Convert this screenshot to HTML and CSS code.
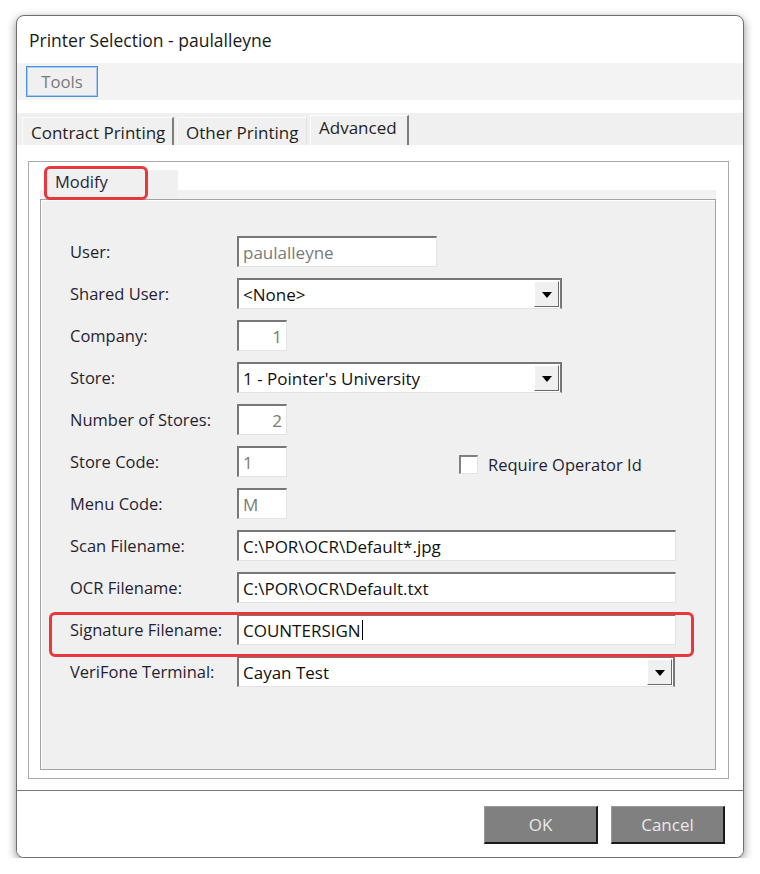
FILE: index.html
```html
<!DOCTYPE html>
<html>
<head>
<meta charset="utf-8">
<title>Printer Selection</title>
<link rel="stylesheet" href="styles.css">
</head>
<body>
<div class="window">
  <div class="titlebar">Printer Selection - paulalleyne</div>
  <div class="toolbar"><div class="tools-btn">Tools</div></div>
  <div class="gap"></div>
  <div class="tabstrip">
    <div class="tab tab-first">Contract Printing</div>
    <div class="tab tab-other">Other Printing</div>
    <div class="tab tab-active">Advanced</div>
  </div>
  <div class="page">
    <div class="group">
      <div class="subtabs">
        <div class="subtab">Modify</div>
      </div>
      <div class="panel">
        <div class="row">
          <span class="label">User:</span>
          <div class="field w-user disabled">paulalleyne</div>
        </div>
        <div class="row">
          <span class="label">Shared User:</span>
          <div class="field select w-select"><span class="sel-text">&lt;None&gt;</span><span class="drop"><span class="tri"></span></span></div>
        </div>
        <div class="row">
          <span class="label">Company:</span>
          <div class="field w-short disabled right">1</div>
        </div>
        <div class="row">
          <span class="label">Store:</span>
          <div class="field select w-select"><span class="sel-text">1 - Pointer's University</span><span class="drop"><span class="tri"></span></span></div>
        </div>
        <div class="row">
          <span class="label">Number of Stores:</span>
          <div class="field w-short disabled right">2</div>
        </div>
        <div class="row">
          <span class="label">Store Code:</span>
          <div class="field w-short disabled">1</div>
          <div class="check-wrap"><span class="checkbox"></span><span class="check-label">Require Operator Id</span></div>
        </div>
        <div class="row">
          <span class="label">Menu Code:</span>
          <div class="field w-short disabled">M</div>
        </div>
        <div class="row">
          <span class="label">Scan Filename:</span>
          <div class="field w-long">C:\POR\OCR\Default*.jpg</div>
        </div>
        <div class="row">
          <span class="label">OCR Filename:</span>
          <div class="field w-long">C:\POR\OCR\Default.txt</div>
        </div>
        <div class="row row-highlight">
          <span class="label">Signature Filename:</span>
          <div class="field w-long">COUNTERSIGN<span class="caret"></span></div>
        </div>
        <div class="row">
          <span class="label">VeriFone Terminal:</span>
          <div class="field select w-long2"><span class="sel-text">Cayan Test</span><span class="drop"><span class="tri"></span></span></div>
        </div>
      </div>
    </div>
  </div>
  <div class="footer">
    <div class="btn">OK</div>
    <div class="btn">Cancel</div>
  </div>
</div>
</body>
</html>
```

FILE: styles.css
```css
*, *::before, *::after { box-sizing: border-box; }

html, body {
  margin: 0;
  padding: 0;
  background: #ffffff;
}

body {
  font-family: "Open Sans", "Noto Sans", sans-serif;
  color: #1f1f1f;
}

.window {
  margin: 15px 0 0 16px;
  width: 728px;
  height: 843px;
  background: #ffffff;
  border: 1px solid #6e6e6e;
  border-radius: 8px;
  box-shadow: 0 3px 10px rgba(0, 0, 0, 0.45);
  display: flex;
  flex-direction: column;
  overflow: hidden;
}

.titlebar {
  height: 47px;
  flex: none;
  display: flex;
  align-items: center;
  padding-left: 12px;
  font-size: 17.5px;
  color: #1a1a1a;
}

.toolbar {
  height: 37px;
  flex: none;
  background: #f3f3f3;
  padding: 3px 0 0 9px;
}

.tools-btn {
  width: 72px;
  height: 31px;
  border: 1px solid #4a92d9;
  box-shadow: inset 0 0 0 1px #a9cdef;
  display: flex;
  align-items: center;
  justify-content: center;
  font-size: 16.8px;
  color: #7a7a7a;
  background: #f0f0f0;
}

.gap {
  height: 13px;
  flex: none;
}

.tabstrip {
  height: 32px;
  flex: none;
  background: #f0f0f0;
  display: flex;
  align-items: flex-end;
  padding-left: 5px;
  gap: 3px;
}

.tab {
  height: 28px;
  display: flex;
  align-items: center;
  padding: 2px 0 0 8px;
  font-size: 17px;
  color: #1f1f1f;
  background: #f0f0f0;
  border-left: 1px solid #fbfbfb;
  border-top: 1px solid #fbfbfb;
  white-space: nowrap;
}

.tab-first {
  width: 152px;
  border-right: 2px solid #7d7d7d;
}

.tab-other {
  width: 130px;
  border-right: 1px solid #e2e2e2;
}

.tab-active {
  width: 99px;
  height: 30px;
  align-items: flex-start;
  padding-top: 0;
  border-right: 2px solid #7d7d7d;
  border-left: 1px solid #ffffff;
  border-top: 1px solid #ffffff;
}

.page {
  height: 645px;
  flex: none;
  background: #ffffff;
  border-top: 1px solid #ffffff;
  padding: 15px 14px 11px 11px;
}

.group {
  height: 618px;
  border: 1px solid #a9a9a9;
  padding: 8px 12px 8px 11px;
  display: flex;
  flex-direction: column;
  background: #ffffff;
}

.subtabs {
  height: 29px;
  flex: none;
  display: flex;
  align-items: stretch;
  padding-left: 5px;
  background: linear-gradient(to bottom, #ffffff 0, #ffffff 20px, #f2f2f2 20px);
}

.subtab {
  width: 133px;
  position: relative;
  background: #f0f0f0;
  font-size: 16.5px;
  color: #2a1f3a;
  padding: 0 0 0 10px;
}

.subtab::after {
  content: "";
  position: absolute;
  left: -1px;
  top: -4px;
  width: 104px;
  height: 34px;
  border: 3px solid #e8383d;
  border-radius: 6px;
}

.panel {
  flex: 1;
  background: #f0f0f0;
  border: 1px solid #a3a3a3;
  box-shadow: inset 1px 1px 0 #ffffff;
  padding: 36px 0 0 29px;
  display: flex;
  flex-direction: column;
  gap: 11px;
}

.row {
  height: 31px;
  display: flex;
  align-items: center;
}

.label {
  width: 167px;
  flex: none;
  font-size: 16.5px;
  color: #261f33;
  white-space: nowrap;
}

.field {
  height: 31px;
  background: #ffffff;
  border-style: solid;
  border-width: 2px 1px 1px 2px;
  border-color: #777777 #e2e2e2 #e2e2e2 #777777;
  display: flex;
  align-items: center;
  padding: 0 4px;
  font-size: 17px;
  color: #111111;
  white-space: nowrap;
}

.field.disabled {
  color: #7a7a7a;
}

.field.right {
  justify-content: flex-end;
}

.w-user { width: 200px; }
.w-short { width: 50px; }
.w-select { width: 325px; }
.w-long { width: 439px; }
.w-long2 { width: 438px; }

.select {
  padding-right: 0;
  border-color: #777777 #777777 #e2e2e2 #777777;
  border-width: 2px 2px 1px 2px;
}

.sel-text {
  flex: 1;
  color: #111111;
}

.drop {
  width: 25px;
  height: 26px;
  margin-right: 1px;
  background: #f0f0f0;
  border-style: solid;
  border-width: 1px;
  border-color: #ffffff #6a6a6a #6a6a6a #ffffff;
  display: flex;
  align-items: center;
  justify-content: center;
}

.tri {
  width: 0;
  height: 0;
  border-left: 5px solid transparent;
  border-right: 5px solid transparent;
  border-top: 6px solid #000000;
  margin-top: 1px;
}

.check-wrap {
  display: flex;
  align-items: center;
  margin: 6px 0 0 172px;
}

.checkbox {
  width: 19px;
  height: 19px;
  background: #ffffff;
  border-style: solid;
  border-width: 2px 1px 1px 2px;
  border-color: #808080 #e3e3e3 #e3e3e3 #808080;
}

.check-label {
  margin-left: 10px;
  font-size: 16.5px;
  color: #261f33;
}

.caret {
  display: inline-block;
  width: 1px;
  height: 20px;
  background: #000000;
  margin-left: 1px;
}

.row-highlight {
  position: relative;
}

.row-highlight::after {
  content: "";
  position: absolute;
  left: -21px;
  top: -2px;
  width: 645px;
  height: 45px;
  border: 3px solid #e8383d;
  border-radius: 6px;
}

.footer {
  flex: 1;
  border-top: 1px solid #7a7a7a;
  display: flex;
  justify-content: flex-end;
  align-items: flex-start;
  gap: 13px;
  padding: 15px 18px 0 0;
  background: #ffffff;
}

.btn {
  width: 114px;
  height: 38px;
  background: #808080;
  border-style: solid;
  border-width: 1px 2px 2px 1px;
  border-color: #9a9a9a #1a1a1a #1a1a1a #9a9a9a;
  color: #e9e9e9;
  font-size: 17px;
  display: flex;
  align-items: center;
  justify-content: center;
}
```
